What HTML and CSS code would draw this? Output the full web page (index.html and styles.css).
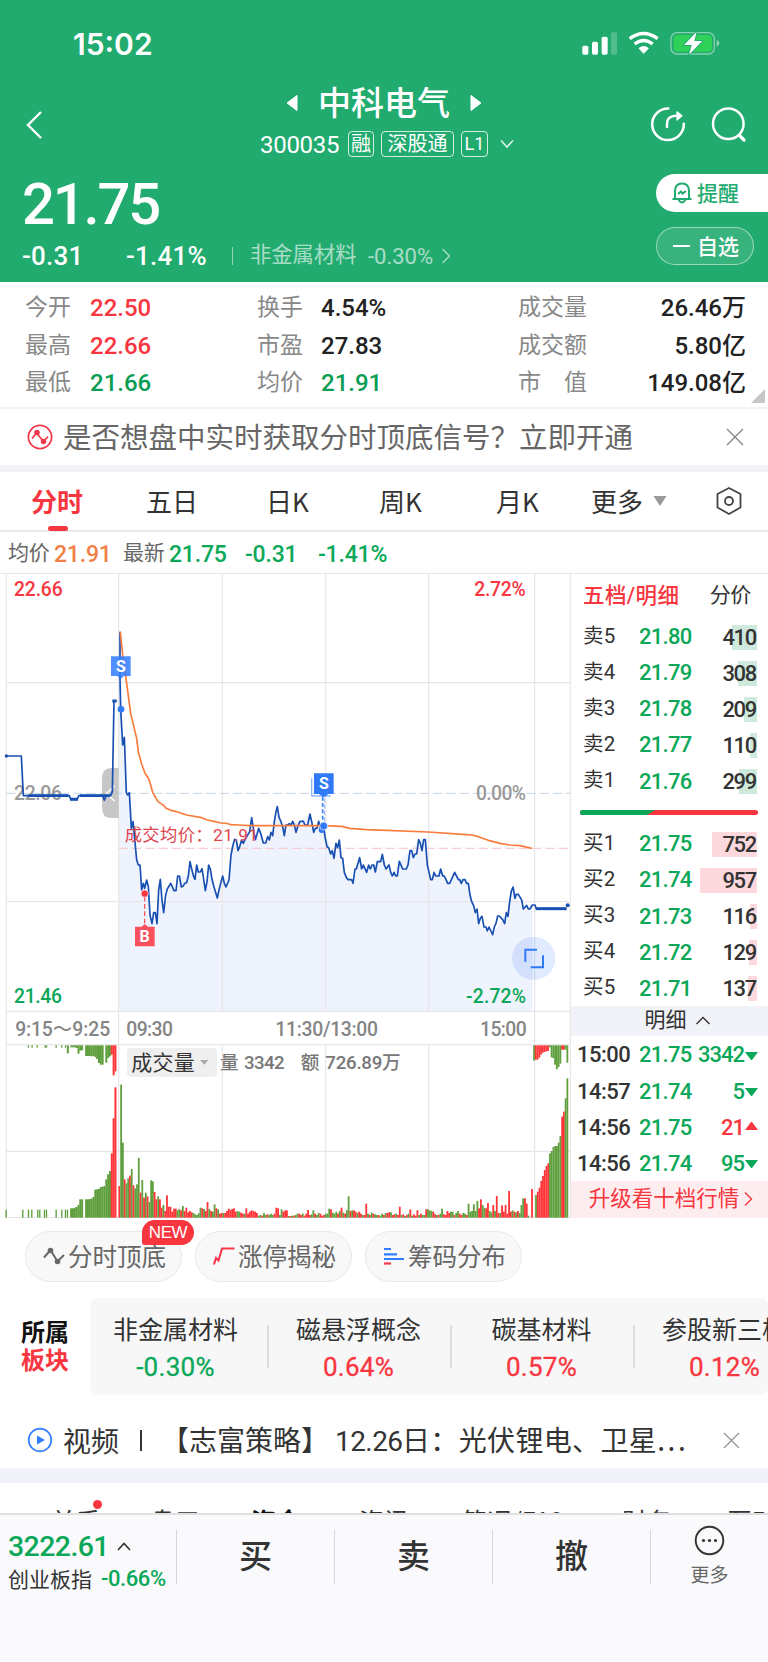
FILE: index.html
```html
<!DOCTYPE html>
<html lang="zh-CN">
<head>
<meta charset="utf-8">
<title>中科电气 300035</title>
<link rel="stylesheet" href="styles.css">
</head>
<body>
<header class="hero">
  <div class="status">
    <span class="clock">15:02</span>
    <svg class="status-icons" width="142" height="26" viewBox="0 0 426 78">
      <g fill="#fff"><rect x="1" y="44" width="18" height="27" rx="5"/><rect x="30" y="32" width="18" height="39" rx="5"/><rect x="59" y="17" width="18" height="54" rx="5"/><rect x="87" y="4" width="18" height="67" rx="5" opacity=".22"/></g>
      <g fill="none" stroke="#fff" stroke-width="10"><path d="M143 23Q185-8 227 23"/><path d="M158 39Q185 18 212 39"/></g>
      <path d="M171 52Q185 41 199 52L185 67Z" fill="#fff" stroke="#fff" stroke-width="3" stroke-linejoin="round"/>
      <rect x="267" y="5" width="130" height="64" rx="18" fill="none" stroke="#fff" stroke-opacity=".45" stroke-width="4"/>
      <rect x="275" y="12" width="115" height="50" rx="12" fill="#30d158"/>
      <path d="M404 27Q412 30 412 37Q412 44 404 48Z" fill="#fff" opacity=".5"/>
      <path d="M344 2L306 42H329L321 71L361 30H337Z" fill="#fff" stroke="#22ab6f" stroke-width="6" paint-order="stroke" stroke-linejoin="round"/>
    </svg>
  </div>
  <div class="titlebar">
    <svg class="back" width="20" height="32" viewBox="0 0 20 32"><path d="M16 3L3 16L16 29" fill="none" stroke="#fff" stroke-width="2.4"/></svg>
    <div class="title">
      <div class="name">
        <svg width="12" height="18" viewBox="0 0 12 18"><path d="M11 1.5V16.5L1 9Z" fill="#fff" stroke="#fff" stroke-linejoin="round"/></svg>
        <h1>中科电气</h1>
        <svg width="12" height="18" viewBox="0 0 12 18"><path d="M1 1.5V16.5L11 9Z" fill="#fff" stroke="#fff" stroke-linejoin="round"/></svg>
      </div>
      <div class="code"><span class="num">300035</span><i class="tag t1">融</i><i class="tag t2">深股通</i><i class="tag t3">L1</i>
        <svg width="14" height="10" viewBox="0 0 14 10"><path d="M1 1.5L7 8L13 1.5" fill="none" stroke="#fff" stroke-width="1.6" opacity=".85"/></svg>
      </div>
    </div>
    <div class="actions">
      <svg width="36" height="36" viewBox="0 0 36 36" fill="none" stroke="#fff" stroke-width="2.5" stroke-linecap="round"><path d="M18.3 2.5A15.8 15.8 0 1 0 33.8 17.8"/><path d="M17 21V18Q17 10 26 9.8H30"/><path d="M27 5.8L32 9.8L27 14Z" fill="#fff" stroke-width="1.2" stroke-linejoin="round"/></svg>
      <svg width="36" height="36" viewBox="0 0 36 36" fill="none" stroke="#fff" stroke-width="2.5" stroke-linecap="round"><circle cx="17.3" cy="17.8" r="15.3"/><path d="M28.5 29.5L33 34" stroke-width="3.2"/></svg>
    </div>
  </div>
  <div class="quote">
    <div>
      <div class="price num">21.75</div>
      <div class="change num"><span class="c1">-0.31</span><span class="c2">-1.41%</span><b class="sep"></b><span class="ind">非金属材料</span><span class="c3">-0.30%</span>
        <svg width="10" height="18" viewBox="0 0 10 18"><path d="M1.5 2L8.5 9L1.5 16" fill="none" stroke="#fff" stroke-width="1.4" opacity=".6"/></svg>
      </div>
    </div>
    <div class="btns">
      <div class="remind">
        <svg width="22" height="24" viewBox="0 0 22 24" fill="none" stroke="#22ab6f" stroke-width="2"><path d="M4 17V10Q4 2.5 11 2.5T18 10V17"/><path d="M1.5 18H20.5"/><path d="M7.5 19Q11 24 14.5 19"/><path d="M7 13L10 10.5L11.5 12.5L15 10"/></svg>
        <span>提醒</span>
      </div>
      <div class="watch"><b></b><span>自选</span></div>
    </div>
  </div>
</header>

<section class="stats">
  <span>今开</span><b class="num red">22.50</b><span>换手</span><b class="num">4.54%</b><span>成交量</span><b class="num r">26.46<em>万</em></b>
  <span>最高</span><b class="num red">22.66</b><span>市盈</span><b class="num">27.83</b><span>成交额</span><b class="num r">5.80<em>亿</em></b>
  <span>最低</span><b class="num dgreen">21.66</b><span>均价</span><b class="num dgreen">21.91</b><span class="split"><i>市</i><i>值</i></span><b class="num r">149.08<em>亿</em></b>
  <svg class="corner" width="14" height="14" viewBox="0 0 14 14"><path d="M14 0V14H0Z" fill="#c8c8c8"/></svg>
</section>

<section class="promo">
  <svg width="26" height="26" viewBox="0 0 26 26" fill="none" stroke="#f5364a" stroke-width="1.7"><circle cx="13" cy="13" r="11.6"/><path d="M5 14.5L9.5 9L16.5 17.5L21 12.5"/><circle cx="10" cy="8.5" r="1.9" fill="#f5364a"/><circle cx="16.5" cy="17.5" r="1.9" fill="#f5364a"/></svg>
  <p>是否想盘中实时获取分时顶底信号？立即开通</p>
  <svg width="18" height="18" viewBox="0 0 18 18"><path d="M1 1L17 17M17 1L1 17" stroke="#888" stroke-width="1.4"/></svg>
</section>

<nav class="tabs">
  <span class="on">分时</span><span>五日</span><span>日K</span><span>周K</span><span>月K</span><span class="more">更多<svg width="14" height="10" viewBox="0 0 14 10"><path d="M.5 0H13.500L7 10Z" fill="#999"/></svg></span>
  <svg width="28" height="30" viewBox="0 0 28 30" fill="none" stroke="#444" stroke-width="1.8" stroke-linejoin="round"><path d="M14 2L25.500 8V21.500L14 28L2.500 21.500V8Z"/><circle cx="14" cy="15" r="4"/></svg>
</nav>

<div class="info num"><span class="w46">均价</span><span class="orange w69">21.91</span><span class="w46">最新</span><span class="green w76">21.75</span><span class="green w73">-0.31</span><span class="green">-1.41%</span></div>

<main class="market">
  <svg class="chart" width="571" height="645" viewBox="0 24 1713 1935">
    <path d="M356 1339V200L360 200L368 540L379 683L388 683L404 820L425 975L434 960L440 945L456 1076L471 1060L481 943L491 1043L512 955L528 977L538 933L565 933L570 890L585 943L590 900L616 977L626 900L652 999L668 933L687 945L693 870L704 823L714 857L749 800L755 758L766 824L776 790L790 834L818 812L832 725L853 812L878 769L900 769L930 747L945 800L970 783L1000 880L1018 825L1033 922L1059 955L1079 878L1100 922L1147 868L1177 933L1198 889L1230 857L1256 824L1276 824L1292 944L1322 912L1349 955L1364 922L1405 955L1436 1076L1478 1109L1519 1043L1539 966L1570 1032L1598 1020V1339Z" fill="#eff3fd"/>
    <g stroke="#e6e6e6" stroke-width="3.500" fill="none">
      <path d="M19 24V1959M356 24V1959M667 24V1339M977 24V1339M1286 24V1339M1604 24V1959M1711 24V1959M0 25H1713M19 353H1711M19 1010H1711M19 1339H1711M19 1439H1711M667 1439V1959M977 1439V1959M1286 1439V1959M19 1759H1711M19 1958H1711"/>
    </g>
    <path d="M19 685H1711" stroke="#c2d5e6" stroke-width="3" stroke-dasharray="28 12"/>
    <path d="M356 850H1711" stroke="#f5cdd2" stroke-width="4" stroke-dasharray="28 12"/>
    <g class="lbl">
      <text x="42" y="94" textLength="146" fill="#f8363f">22.66</text>
      <text x="1423" y="94" textLength="154" fill="#f8363f">2.72%</text>
      <text x="42" y="706" textLength="144" fill="#999">22.06</text>
      <text x="1428" y="706" textLength="150" fill="#999">0.00%</text>
      <text x="42" y="1315" textLength="144" fill="#0aa858">21.46</text>
      <text x="1398" y="1315" textLength="180" fill="#0aa858">-2.72%</text>
      <g fill="#858585"><text x="46" y="1413" textLength="112">9:15</text><text x="158" y="1413" textLength="58">～</text><text x="217" y="1413" textLength="114">9:25</text>
      <text x="379" y="1413" textLength="140">09:30</text><text x="826" y="1413" textLength="308">11:30/13:00</text><text x="1440" y="1413" textLength="140">15:00</text></g>
    </g>
    <path d="M356 609H334Q306 609 306 640V728Q306 759 334 759H356Z" fill="#b9b9b9" opacity=".8"/>
    <path d="M344 662L320 685L344 709" fill="none" stroke="#fff" stroke-width="4"/>
    <g fill="none" stroke="#184fb2" stroke-width="5" stroke-linejoin="round">
      <path d="M19 573H64L70 692H208L212 703H232L236 692H308L313 706L318 692H332L337 680L342 408H350"/>
      <path d="M85 692H205M240 692H330" stroke-width="8"/>
      <path d="M210 703H234M337 408H350" stroke-width="9"/>
      <path d="M360 200V340L362 433L368 540L373 517L379 683L383 690L388 683L394 790L399 770L404 820L410 885L415 900H420L425 975L430 955L434 970L440 945L445 965L450 1050L456 1076L461 1043H466L471 1076L476 975L481 943L486 1005L491 1043L497 990L502 972L512 955L517 965L522 977H528L533 933H538L544 966L549 964L554 955L560 953L565 933L570 890L575 912L580 932L585 943L590 900L595 921H601L606 911L611 943L616 977L621 950L626 900L631 912L636 943L642 966L652 999L657 975L662 955L668 933L673 955L678 966L687 945L693 870L699 840L704 823L709 825L714 857L719 845L725 825L730 835L736 822L742 812L749 800L755 758L760 790L766 824L771 808L776 790L782 805L790 834H797L803 815L808 825L813 802L818 812L823 770L828 740L832 725L837 757L843 770L848 785L853 812L858 780H863L868 776L873 780L878 769L883 780L888 802L893 785L900 769H910L915 780H923L930 747L935 770L941 802L946 790H951L956 769L962 792L970 783L976 820L981 845L986 848L992 867L997 857L1002 880L1008 835L1013 848L1018 825L1023 878L1028 880L1033 922L1038 935L1044 944H1055L1059 955L1065 912H1069L1079 878L1085 912L1090 900L1100 922L1106 900L1111 912L1116 900H1121L1126 921L1132 890H1142L1147 868L1153 900L1158 912L1167 900L1172 922L1177 933L1182 922L1187 933H1192L1198 889L1208 912H1219L1224 900L1230 857H1235L1240 878L1245 867H1250L1256 824L1261 835L1266 857L1271 824H1276L1282 900L1287 922L1292 944H1297L1302 922L1307 933H1317L1322 912L1328 933H1333L1338 944L1343 955H1349L1364 922L1375 944H1379L1384 955L1389 944H1395L1400 955H1405L1410 990L1415 1010L1421 1022L1426 1043L1431 1032L1436 1076L1441 1060L1446 1054L1452 1086H1458L1462 1098L1467 1086L1478 1109L1483 1086L1488 1075L1493 1053H1498L1508 1064L1514 1076L1519 1043L1524 1054L1529 1010L1534 978L1539 966L1545 1000L1549 988H1555L1565 1005L1570 1032L1580 1021L1585 1032H1590L1597 1020H1605L1609 1031"/>
      <path d="M1607 1031H1700" stroke-width="9"/>
    </g>
    <circle cx="1703" cy="1021" r="6" fill="#184fb2"/><circle cx="19" cy="573" r="5" fill="#184fb2"/>
    <path d="M361 200L368 270L378 340L392 445L410 520L415 560L425 598L435 625L447 643L458 682L474 710L492 722L497 729L512 736L530 740L560 750L605 758L622 765L642 769L662 774L680 775L692 779L715 780L750 782H970L1025 784L1050 790L1100 794L1285 801L1400 809L1415 810L1435 815L1465 826L1500 835L1530 840L1560 842L1595 850" fill="none" stroke="#f97c3c" stroke-width="5" stroke-linejoin="round"/>
    <text class="avg" x="374" y="829" textLength="400">成交均价：21.91</text>
    <path d="M434 995V1080" stroke="#f8565f" stroke-width="4" stroke-dasharray="14 8"/>
    <path d="M968 695V775" stroke="#3a80f8" stroke-width="5" stroke-dasharray="12 7"/><path d="M974 700V775" stroke="#8db6fb" stroke-width="3" stroke-dasharray="12 7"/>
    <circle cx="363" cy="433" r="10" fill="#3079f7"/><circle cx="434" cy="986" r="11" fill="#f8363f" stroke="#fff" stroke-width="2"/>
    <circle cx="965" cy="795" r="9" fill="#3079f7"/><circle cx="971" cy="783" r="12" fill="#3079f7" stroke="#fff" stroke-width="2"/>
    <path d="M333 274H392V333H372L362 342L352 333H333Z" fill="#2f7cff" opacity=".85"/>
    <path d="M935 640V693H992" fill="none" stroke="#8db6fb" stroke-width="4"/><path d="M942 625H1001V687H985L971 697L957 687H942Z" fill="#3079f7"/>
    <path d="M405 1085H425L434 1077L444 1085H464V1144H405Z" fill="#f8505d"/>
    <g class="mark"><text x="363" y="320">S</text><text x="972" y="671">S</text><text x="434" y="1131">B</text></g>
    <circle cx="1601" cy="1180" r="65" fill="#2f7cff" opacity=".15"/>
    <path d="M1576 1190V1154H1611M1629 1171V1207H1592" fill="none" stroke="#3079f7" stroke-width="6"/>
    <g id="volume"></g>
    <rect x="381" y="1449" width="270" height="87" rx="12" fill="#efefef"/>
    <g class="vol"><text x="394" y="1515" class="vt" textLength="190">成交量</text><path d="M600 1485H625L613 1499Z" fill="#aaa"/>
    <text x="660" y="1513" textLength="55">量</text><text x="732" y="1513" textLength="122">3342</text><text x="902" y="1513" textLength="56">额</text><text x="976" y="1513" textLength="226">726.89万</text></g>
  </svg>

  <aside class="book num">
    <div class="bookhead"><b>五档/明细</b><span>分价</span></div>
    <div class="rows sell">
      <div><span>卖5</span><b>21.80</b><i style="--w:25px">410</i></div>
      <div><span>卖4</span><b>21.79</b><i style="--w:19px">308</i></div>
      <div><span>卖3</span><b>21.78</b><i style="--w:13px">209</i></div>
      <div><span>卖2</span><b>21.77</b><i style="--w:7px">110</i></div>
      <div><span>卖1</span><b>21.76</b><i style="--w:18px">299</i></div>
    </div>
    <svg class="ratio" width="178" height="5" viewBox="0 0 178 5"><rect width="178" height="5" rx="2.500" fill="#f8363f"/><path d="M2.500 0H75L67 5H2.500A2.500 2.500 0 0 1 2.500 0Z" fill="#0aa858"/></svg>
    <div class="rows buy">
      <div><span>买1</span><b>21.75</b><i style="--w:45px">752</i></div>
      <div><span>买2</span><b>21.74</b><i style="--w:57px">957</i></div>
      <div><span>买3</span><b>21.73</b><i style="--w:7px">116</i></div>
      <div><span>买4</span><b>21.72</b><i style="--w:8px">129</i></div>
      <div><span>买5</span><b>21.71</b><i style="--w:9px">137</i></div>
    </div>
    <div class="detail"><span>明细</span><svg width="14" height="9" viewBox="0 0 14 9"><path d="M.5 8L7 1.500L13.500 8" fill="none" stroke="#333" stroke-width="1.400"/></svg></div>
    <div class="ticks">
      <div><span>15:00</span><b>21.75</b><i>3342</i><u></u></div>
      <div><span>14:57</span><b>21.74</b><i>5</i><u></u></div>
      <div class="up"><span>14:56</span><b>21.75</b><i>21</i><u></u></div>
      <div><span>14:56</span><b>21.74</b><i>95</i><u></u></div>
    </div>
    <div class="upgrade"><span>升级看十档行情</span><svg width="9" height="16" viewBox="0 0 9 16"><path d="M1 1.500L7.500 8L1 14.500" fill="none" stroke="#f8363f" stroke-width="1.400"/></svg></div>
  </aside>
</main>

<section class="chips">
  <div class="chip"><svg width="22" height="18" viewBox="0 0 22 18" fill="none" stroke="#666" stroke-width="2"><path d="M1 10.500L7.500 3L14.500 14.500L21 8"/><circle cx="7.500" cy="3.500" r="1.800" fill="#666"/><circle cx="14.500" cy="14.500" r="1.800" fill="#666"/></svg>分时顶底<em>NEW</em></div>
  <div class="chip"><svg width="22" height="18" viewBox="0 0 22 18" fill="none" stroke="#f5364a" stroke-width="2"><path d="M1 17.500L3 11L5.500 13.500L9 1.500H21.500"/></svg>涨停揭秘</div>
  <div class="chip"><svg width="22" height="18" viewBox="0 0 22 18" fill="none" stroke="#2f7cff" stroke-width="2.200"><path d="M1 2H8M1 7.300H14M1 12H21"/><path d="M1 16.500H8" stroke="#f5364a"/></svg>筹码分布</div>
</section>

<section class="sectors">
  <div class="sname"><b>所属</b><b class="red">板块</b></div>
  <div class="slist">
    <div><span>非金属材料</span><b class="num green">-0.30%</b></div>
    <div><span>磁悬浮概念</span><b class="num red">0.64%</b></div>
    <div><span>碳基材料</span><b class="num red">0.57%</b></div>
    <div><span>参股新三板</span><b class="num red">0.12%</b></div>
  </div>
</section>

<section class="video">
  <svg width="26" height="26" viewBox="0 0 26 26"><circle cx="13" cy="13" r="11.300" fill="none" stroke="#2f7cff" stroke-width="1.700"/><path d="M10 8.500V17.500L18 13Z" fill="#2f7cff"/></svg>
  <span class="v1">视频</span><b></b><p><span class="v2">【志富策略】</span><span class="v3 num">12.26</span><span class="v4">日：光伏锂电、卫星<i>...</i></span></p>
  <svg width="17" height="17" viewBox="0 0 17 17"><path d="M1 1L16 16M16 1L1 16" stroke="#999" stroke-width="1.400"/></svg>
</section>

<nav class="lower"><span class="dot">关系</span><span>盘口</span><b>资金</b><span>资讯</span><span>简况/F10</span><span>财务</span><span>互动</span></nav>

<footer class="bar">
  <div class="index">
    <div class="num i1">3222.61<svg width="14" height="9" viewBox="0 0 14 9"><path d="M1 8L7 1.500L13 8" fill="none" stroke="#333" stroke-width="1.600"/></svg></div>
    <div class="i2">创业板指<span class="num green">-0.66%</span></div>
  </div>
  <div class="act">买</div><div class="act">卖</div><div class="act">撤</div>
  <div class="morebtn"><svg width="31" height="31" viewBox="0 0 31 31"><circle cx="15.500" cy="15.500" r="13.800" fill="none" stroke="#333" stroke-width="1.900"/><g fill="#333"><circle cx="9.500" cy="15.500" r="1.600"/><circle cx="15.500" cy="15.500" r="1.600"/><circle cx="21.500" cy="15.500" r="1.600"/></g></svg>更多</div>
</footer>
<script src="volume.js"></script>
</body>
</html>
```

FILE: styles.css
```css
* { box-sizing: border-box; }
body { margin: 0; width: 768px; height: 1662px; overflow: hidden; background: #fff; color: #333; font-family: "Noto Sans CJK SC", sans-serif; white-space: nowrap; }
h1, p { margin: 0; }
i, em, u { font-style: normal; text-decoration: none; }
svg { display: block; flex: none; }
.num { font-family: Roboto, "Noto Sans CJK SC", sans-serif; font-weight: 500; letter-spacing: -.02em; }
.red { color: #f8363f !important; }
.green { color: #0aa858; }
.dgreen { color: #0a9d54 !important; }
.orange { color: #f08046; }

.hero { height: 282px; background: #22ab6f; color: #fff; overflow: hidden; }
.status { display: flex; justify-content: space-between; padding: 31px 44px 0 73px; height: 80px; }
.clock { font: 600 30px/26px Inter, sans-serif; letter-spacing: 0; }
.titlebar { display: grid; grid-template-columns: 180px 1fr 130px; height: 88px; padding: 0 22px 0 25px; }
.back { margin-top: 29px; }
.title { margin-left: 55px; }
.name { display: flex; align-items: center; gap: 20px; height: 46px; margin-left: 26px; }
.name h1 { font-size: 33px; font-weight: 500; letter-spacing: 0; line-height: 46px; padding-bottom: 4px; }
.code { display: flex; align-items: center; height: 36px; line-height: 36px; font-size: 24px; }
.code .num { width: 88px; letter-spacing: -.3px; font-weight: 400; padding-top: 1px; }
.tag { border: 1.500px solid rgba(255,255,255,.8); border-radius: 4px; height: 26px; font-size: 20px; line-height: 22px; text-align: center; margin-right: 7px; }
.t1 { width: 26px; } .t2 { width: 73px; } .t3 { width: 27px; font: 400 18px/23px Roboto, sans-serif; margin-right: 12px; }
.actions { display: flex; justify-content: flex-end; gap: 25px; padding-top: 26px; margin-right: -1px; }
.quote { display: flex; justify-content: space-between; }
.price { font-size: 58px; line-height: 62px; padding: 5px 0 0 22px; letter-spacing: -2.200px; height: 71px; }
.change { display: flex; align-items: center; font-size: 26px; height: 34px; padding-left: 22px; letter-spacing: .2px; }
.c1 { width: 104px; } .c2 { width: 106px; } .sep { width: 1px; height: 18px; background: #fff; opacity: .5; }
.ind { font-size: 21.300px; line-height: 30px; margin: -3px 0 0 17px; letter-spacing: 0; opacity: .6; font-weight: 400; width: 118px; }
.c3 { font-size: 22px; opacity: .6; width: 73px; font-weight: 400; letter-spacing: 0; }
.btns { width: 112px; padding: 6px 0 0; }
.remind { display: flex; align-items: center; height: 38px; border-radius: 19px 0 0 19px; background: #fff; color: #22ab6f; padding-left: 15px; gap: 4px; font-size: 21px; line-height: 30px; font-weight: 500; }
.remind span, .watch span { margin-top: -2px; }
.watch { display: flex; align-items: center; width: 98px; height: 38px; margin-top: 15px; border-radius: 19px; border: 1.500px solid rgba(255,255,255,.5); background: rgba(255,255,255,.1); padding-left: 16px; gap: 7px; font-size: 21px; line-height: 30px; font-weight: 500; }
.watch b { width: 17px; height: 2px; background: #fff; }

.stats { position: relative; display: grid; grid-template-columns: 65px 167px 64px 197px 90px 138px; grid-auto-rows: 37.800px; align-items: center; height: 127px; padding: 7px 0 0 25px; border-bottom: 2px solid #f3f3f4; }
.stats span { font-size: 23px; color: #888; line-height: 34px; margin-top: -6px; }
.stats b { font-size: 24px; line-height: 34px; color: #222; letter-spacing: 0; }
.stats em { font-weight: 500; }
.r { text-align: right; }
.split { display: flex; gap: 23px; }
.corner { position: absolute; right: 3px; bottom: 4px; }

.promo { display: flex; align-items: center; height: 56px; padding: 0 24px 0 27px; }
.promo p { font-size: 28.500px; color: #666; margin: -3px 0 0 10px; flex: 1; }
.tabs { display: grid; grid-template-columns: 115px 120px 113px 117px 95px 124px 28px; align-items: center; height: 67px; border-top: 7px solid #f2f3f8; border-bottom: 2px solid #e9e9ea; padding-left: 31px; font-size: 26px; line-height: 58px; }
.tabs .on { position: relative; color: #f8363f; font-weight: 700; }
.on::after { content: ""; position: absolute; left: 17px; bottom: -1px; width: 20px; height: 5px; border-radius: 3px; background: #f8363f; }
.more { display: flex; align-items: center; gap: 10px; }
.info { display: flex; align-items: center; height: 41px; padding-left: 8px; font-size: 23px; line-height: 30px; color: #666; letter-spacing: -.2px; padding-top: 4px; }
.info .w46 { width: 46px; font-size: 21px; font-weight: 400; margin-top: -4px; }
.w69 { width: 69px; } .w76 { width: 76px; } .w73 { width: 73px; }

.market { display: flex; height: 645px; }
.lbl { font: 500 58px Roboto, "Noto Sans CJK SC", sans-serif; }
.avg { font: 400 52px Roboto, "Noto Sans CJK SC", sans-serif; fill: #dd4450; }
.mark { font: 700 48px Roboto, sans-serif; fill: #fff; text-anchor: middle; }
.vol { font: 500 56px Roboto, "Noto Sans CJK SC", sans-serif; fill: #777; }
.vt { font: 400 63px "Noto Sans CJK SC", sans-serif; fill: #333; }
.book { width: 197px; border-top: 1px solid #e6e6e6; }
.bookhead { display: flex; align-items: center; justify-content: space-between; height: 44px; padding: 0 17px 6px 12px; font-size: 21.500px; }
.bookhead b { color: #f8363f; font-weight: 500; letter-spacing: .4px; }
.bookhead span { font-weight: 400; font-size: 21px; }
.rows div { display: grid; grid-template-columns: 56px 60px 58px; align-items: center; height: 36.150px; padding-left: 12px; font-size: 22px; line-height: 30px; }
.rows { padding-top: 1px; }
.rows span { font-weight: 400; font-size: 20.500px; letter-spacing: .2px; margin-top: -3px; }
.rows b, .ticks b { color: #0aa858; font-weight: 500; letter-spacing: -.7px; }
.rows i { text-align: right; height: 25px; line-height: 26px; letter-spacing: -1.300px; padding-right: 1px; background: linear-gradient(#cfeadd, #cfeadd) right / var(--w) 100% no-repeat; }
.buy i { background-image: linear-gradient(#fdd8dc, #fdd8dc); }
.ratio { margin: 10px 0 10.500px 9px; }
.detail { display: flex; justify-content: center; align-items: center; gap: 9px; height: 30px; margin-top: -1px; background: #f2f3f8; font-size: 21px; line-height: 30px; font-weight: 400; letter-spacing: 0; padding-left: 15px; }
.detail span { margin-top: -1px; }
.upgrade span { margin-top: 0; }
.ticks div { display: grid; grid-template-columns: 62px 52px 54px 13px; align-items: center; height: 36.150px; padding-left: 6px; font-size: 22px; color: #0aa858; }
.ticks { height: 145px; padding-top: 1px; }
.ticks span { color: #333; letter-spacing: -.5px; }
.ticks i { text-align: right; letter-spacing: -1px; padding-right: 1px; }
.ticks u { border: 6.500px solid transparent; border-top: 8px solid; border-bottom: 0; margin-top: 2px; }
.up i, .up u { color: #f8363f; }
.ticks .up u { border-top: 0; border-bottom: 8px solid; border-left-color: transparent; border-right-color: transparent; margin-top: -3px; }
.upgrade { display: flex; align-items: center; justify-content: center; gap: 5px; height: 37px; background: #fdedee; color: #f8363f; font-size: 21.500px; line-height: 30px; font-weight: 400; letter-spacing: 0; padding-left: 3px; }

.chips { display: flex; gap: 13px; padding: 13px 0 0 25px; height: 80px; }
.chip { position: relative; display: flex; align-items: center; gap: 3px; width: 157px; height: 51px; border: 1px solid #e8e8e8; border-radius: 26px; background: #f8f8f8; padding: 0 0 2px 17px; font-size: 24.500px; color: #666; }
.chip em { position: absolute; left: 116px; top: -12px; width: 52px; height: 25px; border-radius: 13px 13px 13px 3px; background: #f8363f; color: #fff; font: 400 17px/26px "Liberation Sans", sans-serif; text-align: center; letter-spacing: -.4px; }
.sectors { display: flex; height: 97px; }
.sname { width: 90px; padding: 19px 0 0 21px; font-size: 24px; line-height: 28px; color: #111; display: flex; flex-direction: column; }
.slist { display: flex; width: 678px; overflow: hidden; background: #f7f7f8; border-radius: 8px; }
.slist div { position: relative; flex: 0 0 183px; display: flex; flex-direction: column; align-items: center; padding-top: 12px; }
.slist div:first-child { margin-left: -6px; }
.slist div + div::before { content: ""; position: absolute; left: 0; top: 27px; height: 43px; width: 1.500px; background: #ddd; }
.slist span { font-size: 25px; line-height: 36px; }
.slist b { font-size: 26px; line-height: 38px; padding-top: 2px; font-weight: 400; letter-spacing: .3px; -webkit-text-stroke: .3px; }
.video { display: flex; align-items: center; height: 73px; padding: 17px 28px 0 27px; font-size: 28px; line-height: 40px; }
.v1 { margin-left: 10px; }
.video b { width: 2px; height: 21px; background: #333; margin: 0 19px 0 21px; }
.video p { flex: 1; display: flex; align-items: baseline; }
.v2 { width: 174px; }
.v3 { width: 67px; font-weight: 400; font-size: 28px; }
.v4 { letter-spacing: .35px; }
.v4 i { letter-spacing: 2.600px; }
.lower { display: grid; grid-template-columns: 99px 101px 108px 103px 160px 105px 60px; height: 45px; overflow: hidden; border-top: 15px solid #f2f3f8; padding-left: 51px; font-size: 25px; line-height: 74px; }
.lower b { color: #111; }
.dot { position: relative; }
.dot::after { content: ""; position: absolute; left: 42px; top: 17px; width: 9px; height: 9px; border-radius: 50%; background: #f8363f; }
.bar { display: flex; height: 149px; background: #fafafc; border-top: 2px solid #dfdfe2; padding-top: 15px; }
.index { width: 176px; padding-left: 8px; margin-top: -2px; }
.i1 { display: flex; align-items: center; gap: 8px; height: 36px; font-size: 28.500px; color: #0aa858; letter-spacing: -.6px; }
.i2 { display: flex; align-items: center; height: 28px; gap: 9px; font-size: 21px; }
.i2 span { font-size: 22px; }
.act { width: 158px; height: 54px; border-left: 1.500px solid #d8d8da; text-align: center; font-size: 33px; line-height: 49px; font-weight: 500; }
.morebtn { width: 118px; height: 54px; border-left: 1.500px solid #d8d8da; display: flex; flex-direction: column; align-items: center; font-size: 19px; line-height: 28px; color: #666; }
.morebtn svg { margin: -5px 0 4px; }
```

FILE: volume.js
```js
// Bars: "<colour><height>" tokens, spaced by a fixed step, in chart units.
var GREEN = '#5f9f3d', RED = '#ff3438';
var day = 'r95 g399 g225 r115 g103 g118 r126 g146 r97 g88 g100 g179 r75 g113 r60 g75 r64 g47 g112 g109 r77 r55 g64 r55 r30 g38 r20 r67 r33 r33 r18 r27 r27 g22 g26 r22 g35 r20 r30 r16 r20 r16 g14 g10 g8 g13 g30 r28 g26 r20 r47 g26 r20 g18 g40 r28 g25 r12 r14 g14 r14 r20 r27 r23 r26 r28 r18 g20 g18 r15 r12 g12 r28 r12 r18 r22 r20 r18 r14 g6 g8 r6 g14 g8 r10 g8 g12 g8 r12 r30 r28 g8 g25 r18 r22 r22 g5 r5 g6 r6 g8 g12 r12 r8 g12 r6 r12 r23 r8 g10 g22 r12 g8 g14 r12 r6 r8 g12 g12 g27 r25 g15 g12 g18 r12 g20 r30 g15 r12 g22 g64 r20 g22 r22 r18 g14 r18 r12 g8 r8 r42 g12 r8 g15 r12 g10 g8 r8 g6 g12 r8 g14 r14 r16 g16 r8 r10 g12 r8 r33 g8 r10 g5 r8 g12 r25 g6 r10 r6 r22 g8 r12 g8 g8 r25 g25 g22 g20 r18 r10 g8 r8 g12 g27 r10 r8 r20 r14 g18 g18 r8 g14 g20 r12 r8 g14 g12 r8 g42 g18 g20 g40 g20 g50 r28 r55 g38 g30 r28 r44 g20 g16 r38 g20 r65 r14 g14 r37 r18 r38 r12 r80 r18 g22 r18 g16 r20 g14 g38 g58 r58 r42 g6 _0 r86';
var svgNS = 'http://www.w3.org/2000/svg';
var group = document.getElementById('volume');
function bar(x, h, c, top, w) {
  if (c === '_') return;
  var r = document.createElementNS(svgNS, 'rect');
  r.setAttribute('x', x - 2.6);
  r.setAttribute('y', top ? 1441 : 1958 - h);
  r.setAttribute('width', w || 5.4);
  r.setAttribute('height', h);
  r.setAttribute('fill', c === 'g' ? GREEN : RED);
  group.appendChild(r);
}
function run(list, x0, x1, top, w) {
  var t = list.split(' '), step = t.length > 1 ? (x1 - x0) / (t.length - 1) : 0;
  t.forEach(function (s, i) { bar(x0 + i * step, +s.slice(1), s[0], top, w); });
}
run(day, 358, 1596, false);
[19, 69, 86, 96, 114, 120, 134, 140, 169, 186, 197, 203].forEach(function (x) { bar(x, 24, 'g', false, 4); });
run('g28 g28 g30 g32 g38 g55 g55', 213, 246, false, 6);
run('g55 g55 g56 g57 g62 g84 g85 g86 g92 g93 g95 g115 g130 g140 r193 r298 r391', 258, 346, false, 6);
[86, 97, 112, 136, 140, 169, 186, 197].forEach(function (x) { bar(x, 7, 'g', true, 4); });
run('g24 _0 g6 g6 g6 g8 g25 g16 g15', 203, 246, true, 6);
run('g32 g32 g32 g33 g32 g35 g41 g53 g58 g58 _0 g52 g38 g33 r28 r90 r78', 258, 346, true, 6);
run('g68 r78 r90 r110 r125 r143 r155 r163 g193 g200 g212 g215 g215 g225 g245 r303 r318 g358 g418', 1608, 1702, false);
run('g46 r43 r43 r37 r28 r22 r20 r18 r17 g6 g36 g38 g58 g72 g65 g55 r13 r13 g13 g52', 1602, 1702, true);
```
